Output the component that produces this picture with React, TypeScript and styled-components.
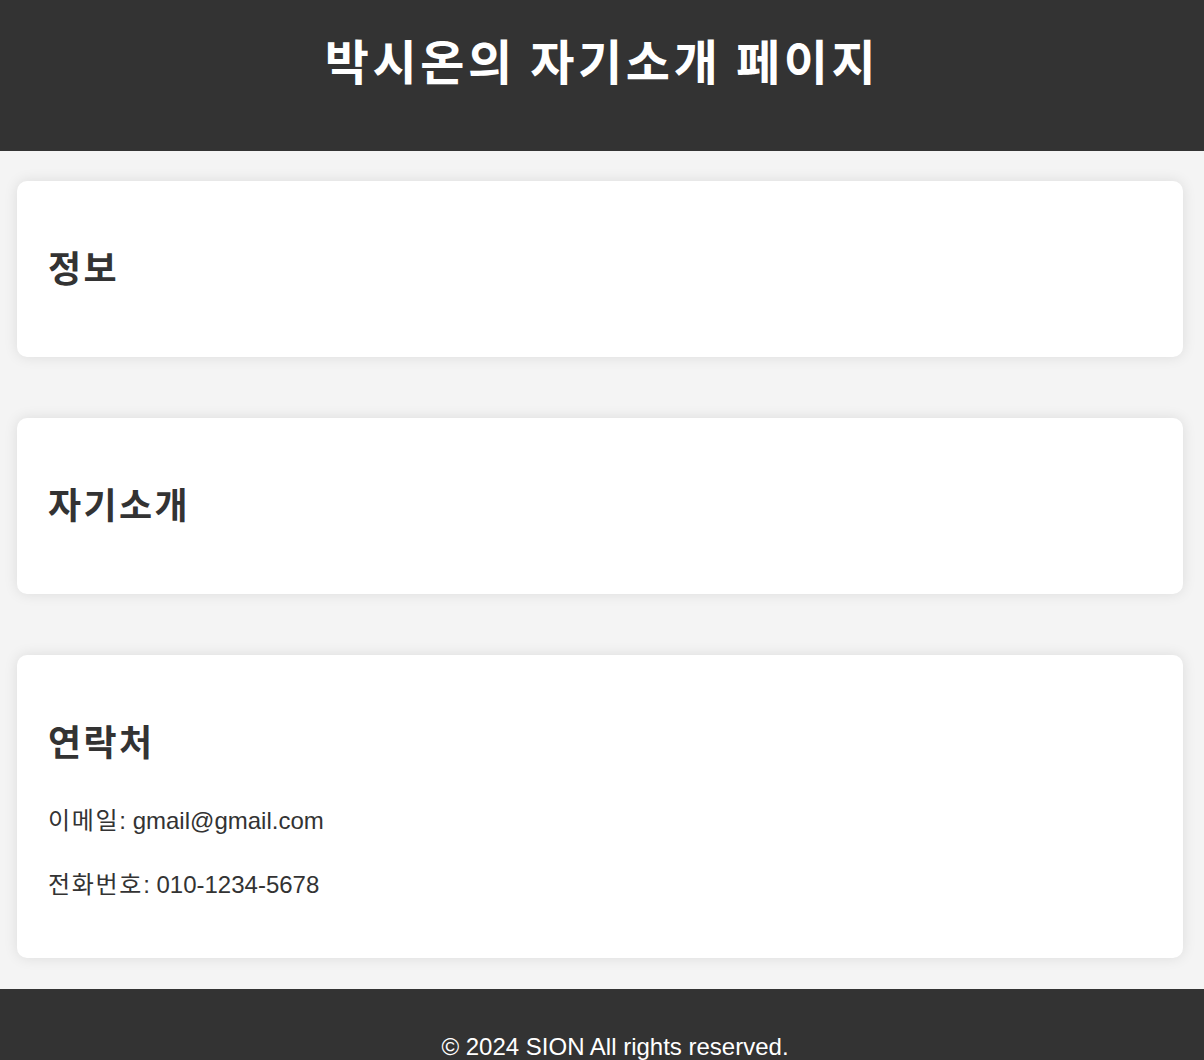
import React from "react";
import styled, { createGlobalStyle } from "styled-components";

const GlobalStyle = createGlobalStyle`
  html, body {
    margin: 0;
    padding: 0;
    background: #f4f4f4;
  }
  body {
    font-family: "Liberation Sans", Arial, "Noto Sans CJK KR", sans-serif;
    color: #333;
  }
`;

const Header = styled.header`
  background: #333;
  color: #fff;
  height: 151px;
  box-sizing: border-box;
  padding-top: 23px;
  text-align: center;
`;

const Title = styled.h1`
  margin: 0;
  font-size: 48px;
  line-height: 72px;
  font-weight: 700;
  letter-spacing: 3.6px;
  font-family: "Noto Sans CJK KR", "Liberation Sans", sans-serif;
`;

const Main = styled.main`
  display: flex;
  flex-direction: column;
  gap: 61px;
  padding: 30px 21px 31px 17px;
`;

const Card = styled.section`
  background: #fff;
  border-radius: 10px;
  box-shadow: 0 0 14px rgba(0, 0, 0, 0.1);
  padding: 30px 31px;
`;

const CardTitle = styled.h2`
  margin: 27px 0 33px;
  font-size: 36px;
  line-height: 56px;
  font-weight: 700;
  letter-spacing: 2.4px;
  color: #333;
  font-family: "Noto Sans CJK KR", "Liberation Sans", sans-serif;
`;

const Line = styled.p`
  margin: 24px 0;
  font-size: 24px;
  line-height: 40px;
  height: 40px;
  color: #333;
  &:last-child {
    margin-bottom: 23px;
  }
`;

const Label = styled.span`
  letter-spacing: 1.7px;
  line-height: 1;
  font-family: "Noto Sans CJK KR", "Liberation Sans", sans-serif;
`;

const Footer = styled.footer`
  background: #333;
  color: #fff;
  text-align: center;
  padding: 44px 0 30px 26px;
`;

const FooterText = styled.p`
  margin: 0;
  font-size: 24px;
  line-height: 28px;
`;

export default function App() {
  return (
    <>
      <GlobalStyle />
      <Header>
        <Title>박시온의 자기소개 페이지</Title>
      </Header>
      <Main>
        <Card>
          <CardTitle>정보</CardTitle>
        </Card>
        <Card>
          <CardTitle>자기소개</CardTitle>
        </Card>
        <Card>
          <CardTitle>연락처</CardTitle>
          <Line>
            <Label>이메일</Label>: gmail@gmail.com
          </Line>
          <Line>
            <Label>전화번호</Label>: 010-1234-5678
          </Line>
        </Card>
      </Main>
      <Footer>
        <FooterText>© 2024 SION All rights reserved.</FooterText>
      </Footer>
    </>
  );
}
